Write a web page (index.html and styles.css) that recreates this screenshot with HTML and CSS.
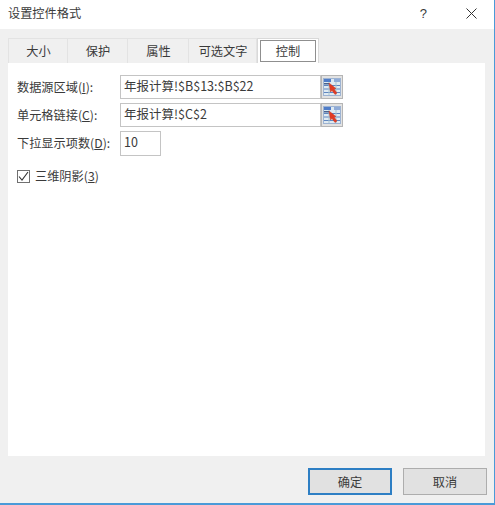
FILE: index.html
```html
<!DOCTYPE html>
<html lang="zh-CN">
<head>
    <meta charset="UTF-8">
    <title>设置控件格式</title>
    <link rel="stylesheet" href="styles.css">
</head>
<body>
    <svg width="0" height="0" class="defs">
        <symbol id="range-icon" viewBox="0 0 18 18">
            <rect x="0.5" y="0.5" width="17" height="17" fill="#dfeaf2" stroke="#9db3d2"/>
            <rect x="1" y="1" width="7" height="3" fill="#4f7cc8"/>
            <rect x="11" y="1" width="6" height="3" fill="#8fabd8"/>
            <path d="M1 7.500h16M1 11h16M1 14.500h16" stroke="#5f86c0"/>
            <path d="M6 4v13M13 4v13" stroke="#a9c4cf"/>
            <rect x="1" y="5" width="5" height="1.500" fill="#47628f"/>
            <path d="M6 5l7 5.500-2 .5 3 4-2 1.500-3-4-1.500 1.500z" fill="#e23a22" stroke="#c43a26" stroke-width="0.5"/>
        </symbol>
    </svg>
    <div class="dialog">
        <header class="titlebar">
            <span class="title">设置控件格式</span>
            <span class="help">?</span>
            <svg class="close" width="11" height="11" viewBox="0 0 11 11">
                <path d="M0.500 0.500l10 10M10.500 0.500l-10 10" stroke="#333" fill="none"/>
            </svg>
        </header>
        <div class="body">
            <nav class="tabs">
                <div class="tab tab-1">大小</div>
                <div class="tab tab-2">保护</div>
                <div class="tab tab-3">属性</div>
                <div class="tab tab-4">可选文字</div>
                <div class="tab tab-active"><span class="tab-focus">控制</span></div>
            </nav>
            <section class="panel">
                <div class="row">
                    <label class="field-label">数据源区域(<u>I</u>):</label>
                    <div class="input input-wide">年报计算!$B$13:$B$22</div>
                    <button class="range-btn"><svg width="18" height="18"><use href="#range-icon"/></svg></button>
                </div>
                <div class="row">
                    <label class="field-label">单元格链接(<u>C</u>):</label>
                    <div class="input input-wide">年报计算!$C$2</div>
                    <button class="range-btn"><svg width="18" height="18"><use href="#range-icon"/></svg></button>
                </div>
                <div class="row">
                    <label class="field-label">下拉显示项数(<u>D</u>):</label>
                    <div class="input input-short">10</div>
                </div>
                <div class="check-row">
                    <span class="checkbox">
                        <svg width="11" height="11" viewBox="0 0 11 11"><path d="M1 5.500l3 3.500 6-8" stroke="#333" fill="none" stroke-width="1.100"/></svg>
                    </span>
                    <span>三维阴影(<u>3</u>)</span>
                </div>
            </section>
            <footer class="buttons">
                <button class="btn btn-default">确定</button>
                <button class="btn">取消</button>
            </footer>
        </div>
    </div>
</body>
</html>
```

FILE: styles.css
```css
html, body {
    margin: 0;
    padding: 0;
}

body {
    width: 495px;
    height: 505px;
    overflow: hidden;
    font-family: "Noto Sans CJK SC", "Open Sans", sans-serif;
    font-size: 12.2px;
    color: #3a3a3a;
    background-color: #f0f0f0;
}

.defs {
    position: absolute;
}

.dialog {
    box-sizing: border-box;
    width: 495px;
    height: 505px;
    display: flex;
    flex-direction: column;
    border-right: 1px solid #4a9ad8;
    border-bottom: 2px solid #4a9ad8;
}

.titlebar {
    height: 29px;
    flex: none;
    display: flex;
    align-items: center;
    background-color: #ffffff;
    padding-left: 8px;
}

.title {
    flex: 1;
    line-height: 27px;
    margin-bottom: 2px;
}

.help {
    font-family: "Liberation Sans", sans-serif;
    font-size: 13px;
    margin-right: 39px;
    margin-bottom: 2px;
}

.close {
    margin-right: 17px;
    margin-bottom: 2px;
}

.body {
    flex: 1;
    display: flex;
    flex-direction: column;
    padding: 9px 8px 0 8px;
    background-color: #f0f0f0;
}

.tabs {
    display: flex;
    height: 25px;
    flex: none;
}

.tab {
    box-sizing: border-box;
    height: 25px;
    text-align: center;
    line-height: 25px;
    padding-left: 1px;
    background-color: #f0f0f0;
    border: 1px solid #e3e3e3;
    border-bottom: none;
    border-left: none;
}

.tab-1 {
    width: 60px;
    border-left: 1px solid #e3e3e3;
}

.tab-2 {
    width: 60px;
}

.tab-3 {
    width: 61px;
}

.tab-4 {
    width: 68px;
}

.tab-active {
    width: 62px;
    padding: 1px 2px 0 2px;
    background-color: #ffffff;
    border-left: 1px solid #d9d9d9;
    border-color: #d9d9d9;
}

.tab-focus {
    display: block;
    box-sizing: border-box;
    height: 22px;
    line-height: 20px;
    border: 1px solid #8f8f8f;
}

.panel {
    box-sizing: border-box;
    width: 477px;
    height: 393px;
    flex: none;
    background-color: #ffffff;
    padding: 12px 9px 0 9px;
}

.row {
    display: flex;
    align-items: stretch;
    margin-bottom: 4px;
}

.field-label {
    width: 103px;
    flex: none;
    line-height: 24px;
    white-space: nowrap;
}

.input {
    box-sizing: border-box;
    height: 24px;
    line-height: 19px;
    font-size: 12.5px;
    padding-left: 3px;
    border: 1px solid #c4c4c4;
    white-space: nowrap;
}

.input-wide {
    width: 201px;
}

.input-short {
    width: 41px;
    height: 25px;
}

.range-btn {
    box-sizing: border-box;
    width: 22px;
    height: 24px;
    padding: 0;
    display: flex;
    align-items: center;
    justify-content: center;
    background-color: #e2e2e2;
    border: 1px solid #b5b5b5;
}

.check-row {
    display: flex;
    align-items: center;
    gap: 5px;
    margin-top: 10px;
    height: 20px;
}

.checkbox {
    box-sizing: border-box;
    width: 13px;
    height: 13px;
    display: flex;
    align-items: center;
    justify-content: center;
    border: 1px solid #707070;
}

.buttons {
    display: flex;
    justify-content: flex-end;
    gap: 11px;
    padding-top: 12px;
    margin-right: -1px;
}

.btn {
    box-sizing: border-box;
    width: 84px;
    height: 27px;
    padding: 0;
    font-family: inherit;
    font-size: 12.2px;
    color: #3a3a3a;
    background-color: #e1e1e1;
    border: 1px solid #adadad;
}

.btn-default {
    border: 2px solid #2e7fc4;
}
```
